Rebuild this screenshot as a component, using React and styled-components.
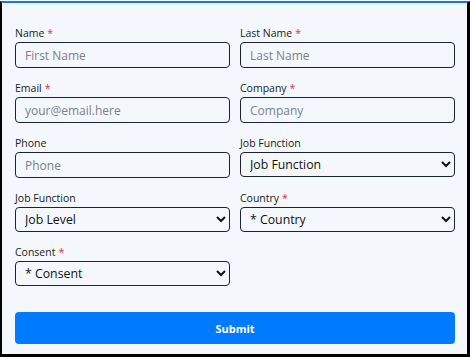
import React from "react";
import styled, { createGlobalStyle } from "styled-components";

const GlobalStyle = createGlobalStyle`
  html, body {
    margin: 0;
    padding: 0;
    background: #f4f8fc;
  }
  body {
    font-family: "Open Sans", "Noto Sans", sans-serif;
  }
`

const Frame = styled.div`
  box-sizing: border-box;
  width: 470px;
  height: 356px;
  margin-top: 1px;
  border-top: 2px solid #1479f0;
  border-left: 2px solid #000;
  border-right: 3px solid #000;
  border-bottom: 3px solid #000;
  background: #f4f8fc;
`

const Form = styled.form`
  padding: 23px 12px 10px 13px;
  display: flex;
  flex-direction: column;
`

const Grid = styled.div`
  display: grid;
  grid-template-columns: 1fr 1fr;
  column-gap: 10px;
  row-gap: 13px;
`

const Field = styled.div`
  display: flex;
  flex-direction: column;
`

const Label = styled.label`
  font-size: 10.5px;
  line-height: 15px;
  color: #1a1a1a;
  margin-bottom: 1px;
`

const Star = styled.span`
  color: #e0293a;
  margin-left: 3px;
`

const Input = styled.input`
  box-sizing: border-box;
  height: 26px;
  width: 100%;
  border: 1px solid #1c2333;
  border-radius: 4px;
  background: #f4f8fc;
  padding: 0 9px;
  font-family: "Open Sans", sans-serif;
  font-size: 12px;
  color: #222;
  outline: none;
  &::placeholder {
    color: #7d8088;
  }
`

const Select = styled.select`
  box-sizing: border-box;
  height: 25px;
  width: 100%;
  border: 1px solid #1c2333;
  border-radius: 4px;
  background: #f4f8fc;
  padding: 0 5px;
  font-family: "Open Sans", sans-serif;
  font-size: 12.3px;
  color: #111;
`

const Submit = styled.button`
  margin-top: 26px;
  height: 32px;
  width: 100%;
  border: none;
  border-radius: 4px;
  background: #007bff;
  color: #fff;
  font-family: "Open Sans", sans-serif;
  font-weight: 700;
  font-size: 11px;
`

const TextField = ({ label, placeholder, required }) => (
  <Field>
    <Label>{label}{required && <Star>*</Star>}</Label>
    <Input placeholder={placeholder} />
  </Field>
)

const SelectField = ({ label, option, required }) => (
  <Field>
    <Label>{label}{required && <Star>*</Star>}</Label>
    <Select defaultValue="">
      <option value="">{option}</option>
    </Select>
  </Field>
)

const App = () => {
  return (
    <>
      <GlobalStyle />
      <Frame>
        <Form onSubmit={(e) => e.preventDefault()}>
          <Grid>
            <TextField label="Name" placeholder="First Name" required />
            <TextField label="Last Name" placeholder="Last Name" required />
            <TextField label="Email" placeholder="your@email.here" required />
            <TextField label="Company" placeholder="Company" required />
            <TextField label="Phone" placeholder="Phone" />
            <SelectField label="Job Function" option="Job Function" />
            <SelectField label="Job Function" option="Job Level" />
            <SelectField label="Country" option="* Country" required />
            <SelectField label="Consent" option="* Consent" required />
          </Grid>
          <Submit type="submit">Submit</Submit>
        </Form>
      </Frame>
    </>
  )
}

export default App
